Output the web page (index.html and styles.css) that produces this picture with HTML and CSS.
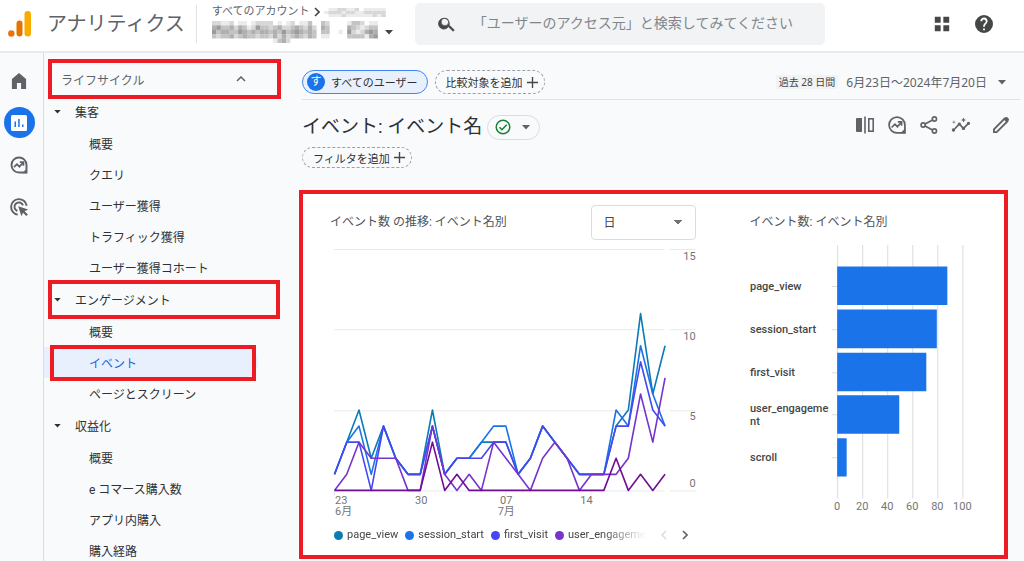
FILE: index.html
```html
<!DOCTYPE html>
<html lang="ja">
<head>
<meta charset="utf-8">
<meta name="viewport" content="width=device-width, initial-scale=1">
<title>アナリティクス</title>
<link rel="stylesheet" href="styles.css">
</head>
<body>
<header class="topbar">
  <a class="brand" href="#">
    <svg class="brand-logo" viewBox="0 0 24 28" aria-hidden="true">
      <circle cx="3.300" cy="23.500" r="3.200" fill="#e8710a"/>
      <rect x="8.500" y="10.500" width="6" height="16" rx="3" fill="#e37400"/>
      <rect x="16.500" y="1" width="6.500" height="25.500" rx="3.200" fill="#f9ab00"/>
    </svg>
    <span>アナリティクス</span>
  </a>
  <div class="account">
    <div class="account-path">すべてのアカウント
      <svg class="icon-crumb" viewBox="0 0 6 10" aria-hidden="true"><path d="M1 1l4 4-4 4" fill="none" stroke="#444746" stroke-width="1.600"/></svg>
      <svg class="mosaic-small" viewBox="0 0 62 9" aria-hidden="true" data-cell="4.4" data-rows="01122112011111|12221221122222|01112111111212"></svg>
    </div>
    <button class="account-picker" type="button" aria-label="アカウントを選択">
      <svg class="mosaic-large" viewBox="0 0 168 22" aria-hidden="true" data-cell="4.36" data-rows="22112011012222010120113003200001332011|45334243125332342234324204300004321233|53443354343443435345434303300105212454|32334234332332424234324301100003333145|00000000000000134200000000000000000000"></svg>
      <svg class="caret" viewBox="0 0 8 5" aria-hidden="true"><path d="M0 0h8L4 4.500z"/></svg>
    </button>
  </div>
  <label class="search">
    <svg viewBox="0 0 24 24" aria-hidden="true"><path d="M15.500 14h-.790l-.280-.270A6.500 6.500 0 1 0 14 14.710l.270.280v.790l5 5 1.500-1.500zm-6 0a4.500 4.500 0 1 1 0-9 4.500 4.500 0 0 1 0 9z" stroke="#444746" stroke-width=".8"/></svg>
    <input type="search" aria-label="検索" placeholder="「ユーザーのアクセス元」と検索してみてください">
  </label>
  <div class="top-actions">
    <button type="button" aria-label="アプリ"><svg viewBox="0 0 20 20" aria-hidden="true"><path d="M2 2h6.500v6.500H2zM11.500 2H18v6.500h-6.500zM2 11.500h6.500V18H2zM11.500 11.500H18V18h-6.500z"/></svg></button>
    <button type="button" aria-label="ヘルプ"><svg viewBox="2 2 20 20" aria-hidden="true"><path d="M12 2a10 10 0 1 0 0 20 10 10 0 0 0 0-20zm1 17h-2v-2h2zm2.070-7.750-.900.920C13.450 12.900 13 13.500 13 15h-2v-.500c0-1.100.450-2.100 1.170-2.830l1.240-1.260A2 2 0 1 0 10 9H8a4 4 0 1 1 7.070 2.250z"/></svg></button>
  </div>
</header>

<div class="shell">
  <nav class="rail" aria-label="メイン">
    <a href="#" aria-label="ホーム"><svg viewBox="0 0 24 24" aria-hidden="true"><path d="M3.500 21.500V9.500L12 2.500l8.500 7v12h-6v-7h-5v7z"/></svg></a>
    <a href="#" class="active" aria-label="レポート"><svg viewBox="0 0 20 20" aria-hidden="true"><path fill="#fff" d="M3.500 2h13A1.500 1.500 0 0 1 18 3.500v13a1.500 1.500 0 0 1-1.500 1.500h-13A1.500 1.500 0 0 1 2 16.500v-13A1.500 1.500 0 0 1 3.500 2z"/><path fill="#1a73e8" d="M5.500 8.500H7V14H5.500zM9.200 6h1.500v8H9.200zM13 11.500h1.500V14H13z"/></svg></a>
    <a href="#" aria-label="探索"><svg viewBox="0 0 24 24" aria-hidden="true"><path d="M12 3a9 9 0 1 0 0 18h9v-9a9 9 0 0 0-9-9z" fill="none" stroke="#5f6368" stroke-width="2.300"/><path d="M6 14.500l3.500-3.500 3 3 4.500-5M13 8.500h4.300v4.300" fill="none" stroke="#5f6368" stroke-width="2.100"/><path d="M21.500 16v6H16z"/></svg></a>
    <a href="#" aria-label="広告"><svg viewBox="0 0 24 24" aria-hidden="true"><path d="M10.500 21.200A9.400 9.400 0 1 1 21.200 10.500M10 16.800A5.300 5.300 0 1 1 16.800 10" fill="none" stroke="#5f6368" stroke-width="2.300"/><path d="M11 11l12 4-4.300 2 4 4-1.900 1.900-4-4-1.900 4.100z"/></svg></a>
  </nav>

  <nav class="sidebar" aria-label="レポート">
    <button class="section-head marked" type="button" aria-expanded="true">ライフサイクル
      <svg viewBox="0 0 10 6" aria-hidden="true"><path d="M1 5l4-4 4 4" fill="none" stroke="#5f6368" stroke-width="1.500"/></svg>
    </button>
    <a class="group" href="#"><svg class="caret" viewBox="0 0 8 5" aria-hidden="true"><path d="M0 0h8L4 4.500z"/></svg>集客</a>
    <a class="leaf" href="#">概要</a>
    <a class="leaf" href="#">クエリ</a>
    <a class="leaf" href="#">ユーザー獲得</a>
    <a class="leaf" href="#">トラフィック獲得</a>
    <a class="leaf" href="#">ユーザー獲得コホート</a>
    <a class="group marked" href="#"><svg class="caret" viewBox="0 0 8 5" aria-hidden="true"><path d="M0 0h8L4 4.500z"/></svg>エンゲージメント</a>
    <a class="leaf" href="#">概要</a>
    <a class="leaf current marked" href="#" aria-current="page">イベント</a>
    <a class="leaf" href="#">ページとスクリーン</a>
    <a class="group" href="#"><svg class="caret" viewBox="0 0 8 5" aria-hidden="true"><path d="M0 0h8L4 4.500z"/></svg>収益化</a>
    <a class="leaf" href="#">概要</a>
    <a class="leaf" href="#">e コマース購入数</a>
    <a class="leaf" href="#">アプリ内購入</a>
    <a class="leaf" href="#">購入経路</a>
  </nav>

  <main class="report">
    <div class="filters">
      <button class="chip chip-user" type="button"><span class="chip-badge">す</span>すべてのユーザー</button>
      <button class="chip chip-add" type="button">比較対象を追加<svg viewBox="0 0 12 12" aria-hidden="true"><path d="M6 0v12M0 6h12" stroke="#444746" stroke-width="1.500"/></svg></button>
      <button class="dates" type="button"><span class="range">過去 28 日間</span><span>6月23日～2024年7月20日</span><svg class="caret" viewBox="0 0 8 5" aria-hidden="true"><path d="M0 0h8L4 4.500z"/></svg></button>
    </div>

    <div class="title-row">
      <h1>イベント: イベント名</h1>
      <button class="status" type="button" aria-label="データの状態">
        <svg class="status-ok" viewBox="0 0 16 16" aria-hidden="true"><circle cx="8" cy="8" r="6.800" fill="none" stroke="#188038" stroke-width="1.500"/><path d="M4.500 8.200l2.500 2.500 4.700-4.900" fill="none" stroke="#188038" stroke-width="1.600"/></svg>
        <svg class="caret" viewBox="0 0 8 5" aria-hidden="true"><path d="M0 0h8L4 4.500z"/></svg>
      </button>
      <div class="tools">
        <button type="button" aria-label="比較"><svg viewBox="0 0 20 20" aria-hidden="true"><path d="M2 3h5v14H2a1 1 0 0 1-1-1V4a1 1 0 0 1 1-1zM9.200 1.500h1.600v17H9.200z"/><rect x="13.800" y="3.800" width="4.400" height="12.400" fill="none" stroke="#5f6368" stroke-width="1.600"/></svg></button>
        <button type="button" aria-label="探索"><svg viewBox="0 0 24 24" aria-hidden="true"><path d="M12 2.500a9.500 9.500 0 1 0 0 19h9.500V12A9.500 9.500 0 0 0 12 2.500z" fill="none" stroke="#5f6368" stroke-width="2.100"/><path d="M5.500 15l4-4 3 3L17 9M13 8.300h4.500v4.500" fill="none" stroke="#5f6368" stroke-width="2"/><path d="M22 16v6h-6z"/></svg></button>
        <button type="button" aria-label="共有"><svg viewBox="0 0 24 24" aria-hidden="true"><g fill="none" stroke="#5f6368" stroke-width="2"><circle cx="18.500" cy="4.800" r="2.500"/><circle cx="18.500" cy="19.200" r="2.500"/><circle cx="5" cy="12" r="2.500"/><path d="M7.200 10.800l9.100-4.800M7.200 13.200l9.100 4.800"/></g></svg></button>
        <button type="button" aria-label="インサイト"><svg viewBox="0 0 24 24" aria-hidden="true"><path d="M21 8c-1.450 0-2.260 1.440-1.930 2.510l-3.550 3.560c-.300-.090-.740-.090-1.040 0l-2.550-2.550C12.270 10.450 11.460 9 10 9c-1.450 0-2.270 1.440-1.930 2.520l-4.560 4.550C2.440 15.740 1 16.550 1 18c0 1.100.900 2 2 2 1.450 0 2.260-1.440 1.930-2.510l4.550-4.560c.300.090.740.090 1.040 0l2.550 2.550C12.730 16.550 13.540 18 15 18c1.450 0 2.270-1.440 1.930-2.520l3.560-3.550c1.070.330 2.510-.480 2.510-1.930 0-1.100-.900-2-2-2zM15 9l.940-2.070L18 6l-2.060-.930L15 3l-.920 2.070L12 6l2.080.930zM3.500 11l.500-2 2-.500L4 8l-.500-2L3 8l-2 .500L3 9z"/></svg></button>
        <button class="edit" type="button" aria-label="編集"><svg viewBox="0 0 24 24" aria-hidden="true"><path d="M3.500 20.500v-3.300L16.300 4.400l3.300 3.300L6.800 20.500z" fill="none" stroke="#5f6368" stroke-width="2.200"/><path d="M15 5.200l2.400-2.400c.600-.600 1.600-.600 2.200 0l1.600 1.600c.600.600.600 1.600 0 2.200L18.800 9z"/></svg></button>
      </div>
    </div>

    <button class="chip chip-add chip-filter" type="button">フィルタを追加<svg viewBox="0 0 12 12" aria-hidden="true"><path d="M6 0v12M0 6h12" stroke="#444746" stroke-width="1.500"/></svg></button>

    <section class="cards">
      <article class="trend">
        <div class="card-head">
          <h2>イベント数 の推移: イベント名別</h2>
          <select aria-label="期間の単位"><option>日</option><option>週</option><option>月</option></select>
        </div>
        <svg class="plot" id="trend-plot" viewBox="0 0 366 276" role="img" aria-label="イベント数の推移">
          <path class="grid" d="M4 5.500h330M339 5.500h26M4 85.500h330M339 85.500h26M4 166.500h330M339 166.500h26M4 246.500h330M339 246.500h26M4.500 246v5M89.500 246v5M175.500 246v5M260.500 246v5"/>
          <g id="series"></g>
          <g class="tick end"><text x="365" y="16">15</text><text x="365" y="96">10</text><text x="365" y="176">5</text><text x="365" y="243">0</text></g>
          <g class="tick"><text x="5" y="260">23</text><text x="5" y="271">6月</text></g>
          <g class="tick mid"><text x="91" y="260">30</text><text x="176" y="260">07</text><text x="176" y="271">7月</text><text x="256" y="260">14</text></g>
        </svg>
        <div class="legend">
          <ul>
            <li><i class="dot c1"></i>page_view</li>
            <li><i class="dot c2"></i>session_start</li>
            <li><i class="dot c3"></i>first_visit</li>
            <li><i class="dot c4"></i>user_engagement</li>
          </ul>
          <button type="button" aria-label="前へ" disabled><svg viewBox="0 0 6 10" aria-hidden="true"><path d="M5 1L1 5l4 4" fill="none" stroke="#dadce0" stroke-width="1.500"/></svg></button>
          <button type="button" aria-label="次へ"><svg viewBox="0 0 6 10" aria-hidden="true"><path d="M1 1l4 4-4 4" fill="none" stroke="#5f6368" stroke-width="1.600"/></svg></button>
        </div>
      </article>
      <article class="totals">
        <h2>イベント数: イベント名別</h2>
        <svg class="plot" viewBox="0 0 226 270" role="img" aria-label="イベント数">
          <path class="grid dark" d="M87.500 2v253M112.500 2v253M137.500 2v253M162.500 2v253M187.500 2v253M212.500 2v253M82 43.500h5M82 86.500h5M82 129.500h5M82 171.500h5M82 214.500h5"/>
          <path fill="#1a73e8" d="M87 23.500h110V62H87zM87 66.500h99.500V105H87zM87 109.500h89V148H87zM87 152h62v38.500H87zM87 195h9.500v38H87z"/>
          <g class="name"><text x="0" y="47">page_view</text><text x="0" y="90">session_start</text><text x="0" y="133">first_visit</text><text x="0" y="169">user_engageme</text><text x="0" y="182">nt</text><text x="0" y="218">scroll</text></g>
          <g class="tick mid"><text x="87" y="267">0</text><text x="112" y="267">20</text><text x="137" y="267">40</text><text x="162" y="267">60</text><text x="187" y="267">80</text><text x="212" y="267">100</text></g>
        </svg>
      </article>
    </section>
  </main>
</div>
<script src="charts.js"></script>
</body>
</html>
```

FILE: styles.css
```css
* { box-sizing: border-box; }
body {
  margin: 0;
  height: 100vh;
  overflow: hidden;
  display: grid;
  grid-template-rows: auto 1fr;
  background: #f8fafc;
  color: #303134;
  font-family: Roboto, "Noto Sans CJK JP", sans-serif;
  font-size: 12px;
}
a { color: inherit; text-decoration: none; }
button { font: inherit; color: inherit; background: none; border: 0; padding: 0; }
svg { display: block; fill: #5f6368; flex: none; }
h1, h2 { margin: 0; font-weight: 400; }
.caret { width: 8px; height: 5px; fill: #5f6368; }

/* Top bar */
.topbar {
  display: flex;
  align-items: center;
  height: 53px;
  padding: 0 31px 3px 8px;
  background: #fff;
  border-bottom: 2px solid #e8eaed;
}
.brand { display: flex; align-items: center; gap: 15px; color: #5f6368; font-size: 20px; line-height: 28px; }
.brand-logo { width: 24px; height: 28px; }
.account { margin-left: 11px; padding-left: 15px; border-left: 1px solid #e0e2e5; color: #5f6368; width: 218px; }
.account-path { display: flex; align-items: center; gap: 4px; font-size: 11px; line-height: 14px; white-space: nowrap; }
.icon-crumb { width: 6px; height: 10px; }
.mosaic-small { width: 62px; height: 9px; }
.account-picker { display: flex; align-items: center; gap: 5px; margin-top: 2px; }
.account-picker .caret { fill: #444746; }
.mosaic-large { width: 168px; height: 22px; }
.search {
  display: flex;
  align-items: center;
  gap: 16px;
  flex: 0 1 410px;
  height: 42px;
  margin-left: 1px;
  padding: 0 12px 0 22px;
  background: #f1f3f4;
  border-radius: 5px;
}
.search svg { width: 20px; height: 20px; fill: #444746; }
.search input {
  flex: 1;
  min-width: 0;
  padding: 0 0 5px;
  border: 0;
  background: none;
  color: #5f6368;
  font: 14px/24px "Noto Sans CJK JP", sans-serif;
}
.search input::placeholder { color: #80868b; opacity: 1; }
.top-actions { display: flex; gap: 24px; margin-left: auto; }
.top-actions svg { width: 18px; height: 18px; fill: #444746; }

/* Navigation */
.shell { display: grid; grid-template-columns: 44px 246px minmax(0, 1fr); min-height: 0; }
.rail { display: flex; flex-direction: column; align-items: center; gap: 11px; padding: 12px 5px 0 0; border-right: 1px solid #dadce0; }
.rail a { display: grid; place-items: center; width: 31px; height: 31px; border-radius: 50%; }
.rail svg { width: 20px; height: 20px; }
.rail .active { background: #1a73e8; }

.sidebar { padding-top: 6px; overflow: hidden; }
.sidebar > * { display: flex; align-items: center; position: relative; height: 31px; }
.sidebar .section-head { width: 100%; height: 40px; padding: 0 44px 0 17px; margin-bottom: -4px; justify-content: space-between; color: #5f6368; }
.section-head svg { width: 10px; height: 6px; }
.sidebar .group { height: 33px; padding-left: 10px; gap: 14px; }
.sidebar .caret { width: 7px; height: 4px; fill: #303134; }
.leaf { padding-left: 45px; }
.current { margin-right: 32px; background: #e8f0fe; color: #1967d2; border-radius: 0 16px 16px 0; }
.marked::after { content: ""; position: absolute; border: 4px solid #ed1c24; }
.section-head.marked::after { inset: 0 9px 0 4px; }
.group.marked::after { inset: -3px 10px -3px 4px; }
.leaf.marked::after { inset: -2px 2px -3px 6px; }

/* Report */
.report { padding: 0 4px 0 9px; }
.filters { display: flex; align-items: flex-start; gap: 7px; height: 47px; margin-left: 3px; padding-top: 17px; border-bottom: 1px solid #dfe1e5; }
.chip { display: flex; align-items: center; height: 24px; border-radius: 12px; font-size: 11px; white-space: nowrap; }
.chip-user { gap: 6px; padding: 0 9px 0 4px; border: 1px solid #4285f4; background: #e8f0fe; }
.chip-badge { display: grid; place-items: center; width: 18px; height: 18px; border-radius: 50%; background: #1a73e8; color: #fff; line-height: 18px; }
.chip-add { gap: 4px; padding: 0 6px 0 10px; border: 1px dashed #9aa0a6; }
.chip-add svg { width: 11px; height: 11px; }
.dates { display: flex; align-items: center; gap: 8px; height: 24px; margin-left: auto; padding-right: 14px; color: #5f6368; font-family: "Noto Sans", "Noto Sans CJK JP", sans-serif; }
.dates .range { padding: 0 3px; background: #f1f3f4; color: #444746; font-size: 10px; line-height: 14px; }
.dates .caret { margin-left: 3px; }
.title-row { display: flex; align-items: center; height: 47px; padding-top: 7px; margin-left: 3px; }
h1 { font-size: 19px; line-height: 28px; white-space: nowrap; }
.status { display: flex; align-items: center; gap: 11px; height: 25px; margin-left: 5px; padding: 0 9px 0 7px; border: 1px solid #dadce0; border-radius: 13px; }
.status-ok { width: 16px; height: 16px; }
.tools { display: flex; align-items: center; gap: 12px; margin-left: auto; padding: 0 9px 4px 0; }
.tools svg { width: 20px; height: 20px; }
.tools .edit { margin-left: 8px; }
.chip-filter { height: 21px; margin-left: 3px; }

/* Cards */
.cards {
  display: grid;
  grid-template-columns: minmax(0, 366fr) minmax(0, 226fr);
  column-gap: 53px;
  margin: 22px 12px 0 0;
  padding: 11px 28px 11px 27px;
  background: #fff;
  border: 4px solid #ed1c24;
}
h2 { font-size: 12px; line-height: 35px; color: #505357; white-space: nowrap; }
.card-head { display: flex; align-items: center; justify-content: space-between; height: 35px; }
.card-head select {
  width: 105px;
  height: 35px;
  margin-right: 1px;
  padding: 0 12px 2px;
  appearance: none;
  border: 1px solid #dadce0;
  border-radius: 4px;
  color: #444746;
  font: 12px "Noto Sans CJK JP", sans-serif;
  background: linear-gradient(to bottom right, #757575 50%, transparent 50%) right 13px center / 4px 5px no-repeat,
    linear-gradient(to bottom left, #757575 50%, transparent 50%) right 17px center / 4px 5px no-repeat, #fff;
}
.plot { width: 100%; height: auto; overflow: visible; }
.trend .plot { margin-top: 4px; }
.totals .plot { margin-top: 3px; }
.grid { stroke: #e8eaed; fill: none; }
.grid.dark { stroke: #dadce0; }
.line { fill: none; stroke-width: 1.6px; stroke-linejoin: round; }
.tick { font-size: 11px; fill: #757575; }
.tick.end { text-anchor: end; }
.tick.mid { text-anchor: middle; }
.name { font-size: 11px; font-weight: 500; fill: #444746; }
.legend { display: flex; align-items: center; gap: 15px; margin: 6px 9px 0 4px; font-size: 11px; line-height: 18px; color: #444746; }
.legend ul {
  display: flex;
  gap: 7px;
  flex: 1;
  min-width: 0;
  margin: 0;
  padding: 0;
  overflow: hidden;
  list-style: none;
  -webkit-mask-image: linear-gradient(to right, #000 86%, transparent);
  mask-image: linear-gradient(to right, #000 86%, transparent);
}
.legend li { display: flex; align-items: center; gap: 4px; }
.legend svg { width: 6px; height: 10px; }
.dot { width: 9px; height: 9px; border-radius: 50%; }
.c1 { background: #0b7bb5; }
.c2 { background: #1a73e8; }
.c3 { background: #4548f0; }
.c4 { background: #7534cf; }
```

FILE: charts.js
```js
const NS = "http://www.w3.org/2000/svg";

function add(parent, name, attrs) {
  const el = document.createElementNS(NS, name);
  Object.entries(attrs).forEach(([key, value]) => el.setAttribute(key, value));
  parent.appendChild(el);
}

const series = [
  ["#0b7bb5", [1,3,5,2,4,2,1,1,5,1,2,2,3,3,3,1,2,4,3,2,1,1,1,4,5,11,6,9]],
  ["#1a73e8", [1,3,4,1,4,2,1,1,4,1,2,2,3,4,4,1,2,4,3,2,1,1,1,5,4,9,6,4]],
  ["#4548f0", [1,3,3,0,4,2,1,1,4,1,2,2,2,3,3,1,2,4,3,2,1,1,1,4,4,8,5,4]],
  ["#7534cf", [0,1,3,2,2,2,0,0,4,1,0,1,0,3,2,1,0,2,3,2,0,1,1,1,2,6,3,7]],
  ["#710c94", [0,0,0,0,0,0,0,0,3,0,1,0,0,0,0,0,0,0,0,0,0,0,0,2,0,1,0,1]]
];
const plot = document.getElementById("series");
series.forEach(([color, values]) => {
  const points = values.map((v, i) => `${4.5 + i * 330 / 27},${246 - v * 16.05}`).join(" ");
  add(plot, "polyline", { class: "line", stroke: color, points });
});

// Account names are masked with blocks; each digit is a darkness level.
document.querySelectorAll("[data-rows]").forEach((svg) => {
  const size = Number(svg.dataset.cell);
  const rows = svg.dataset.rows.split("|");
  const height = svg.viewBox.baseVal.height / rows.length;
  rows.forEach((row, y) => [...row].forEach((level, x) => {
    const shade = 255 - level * 20;
    add(svg, "rect", { x: x * size, y: y * height, width: size + 0.2, height: height + 0.2, fill: `rgb(${shade},${shade},${shade})` });
  }));
});
```
